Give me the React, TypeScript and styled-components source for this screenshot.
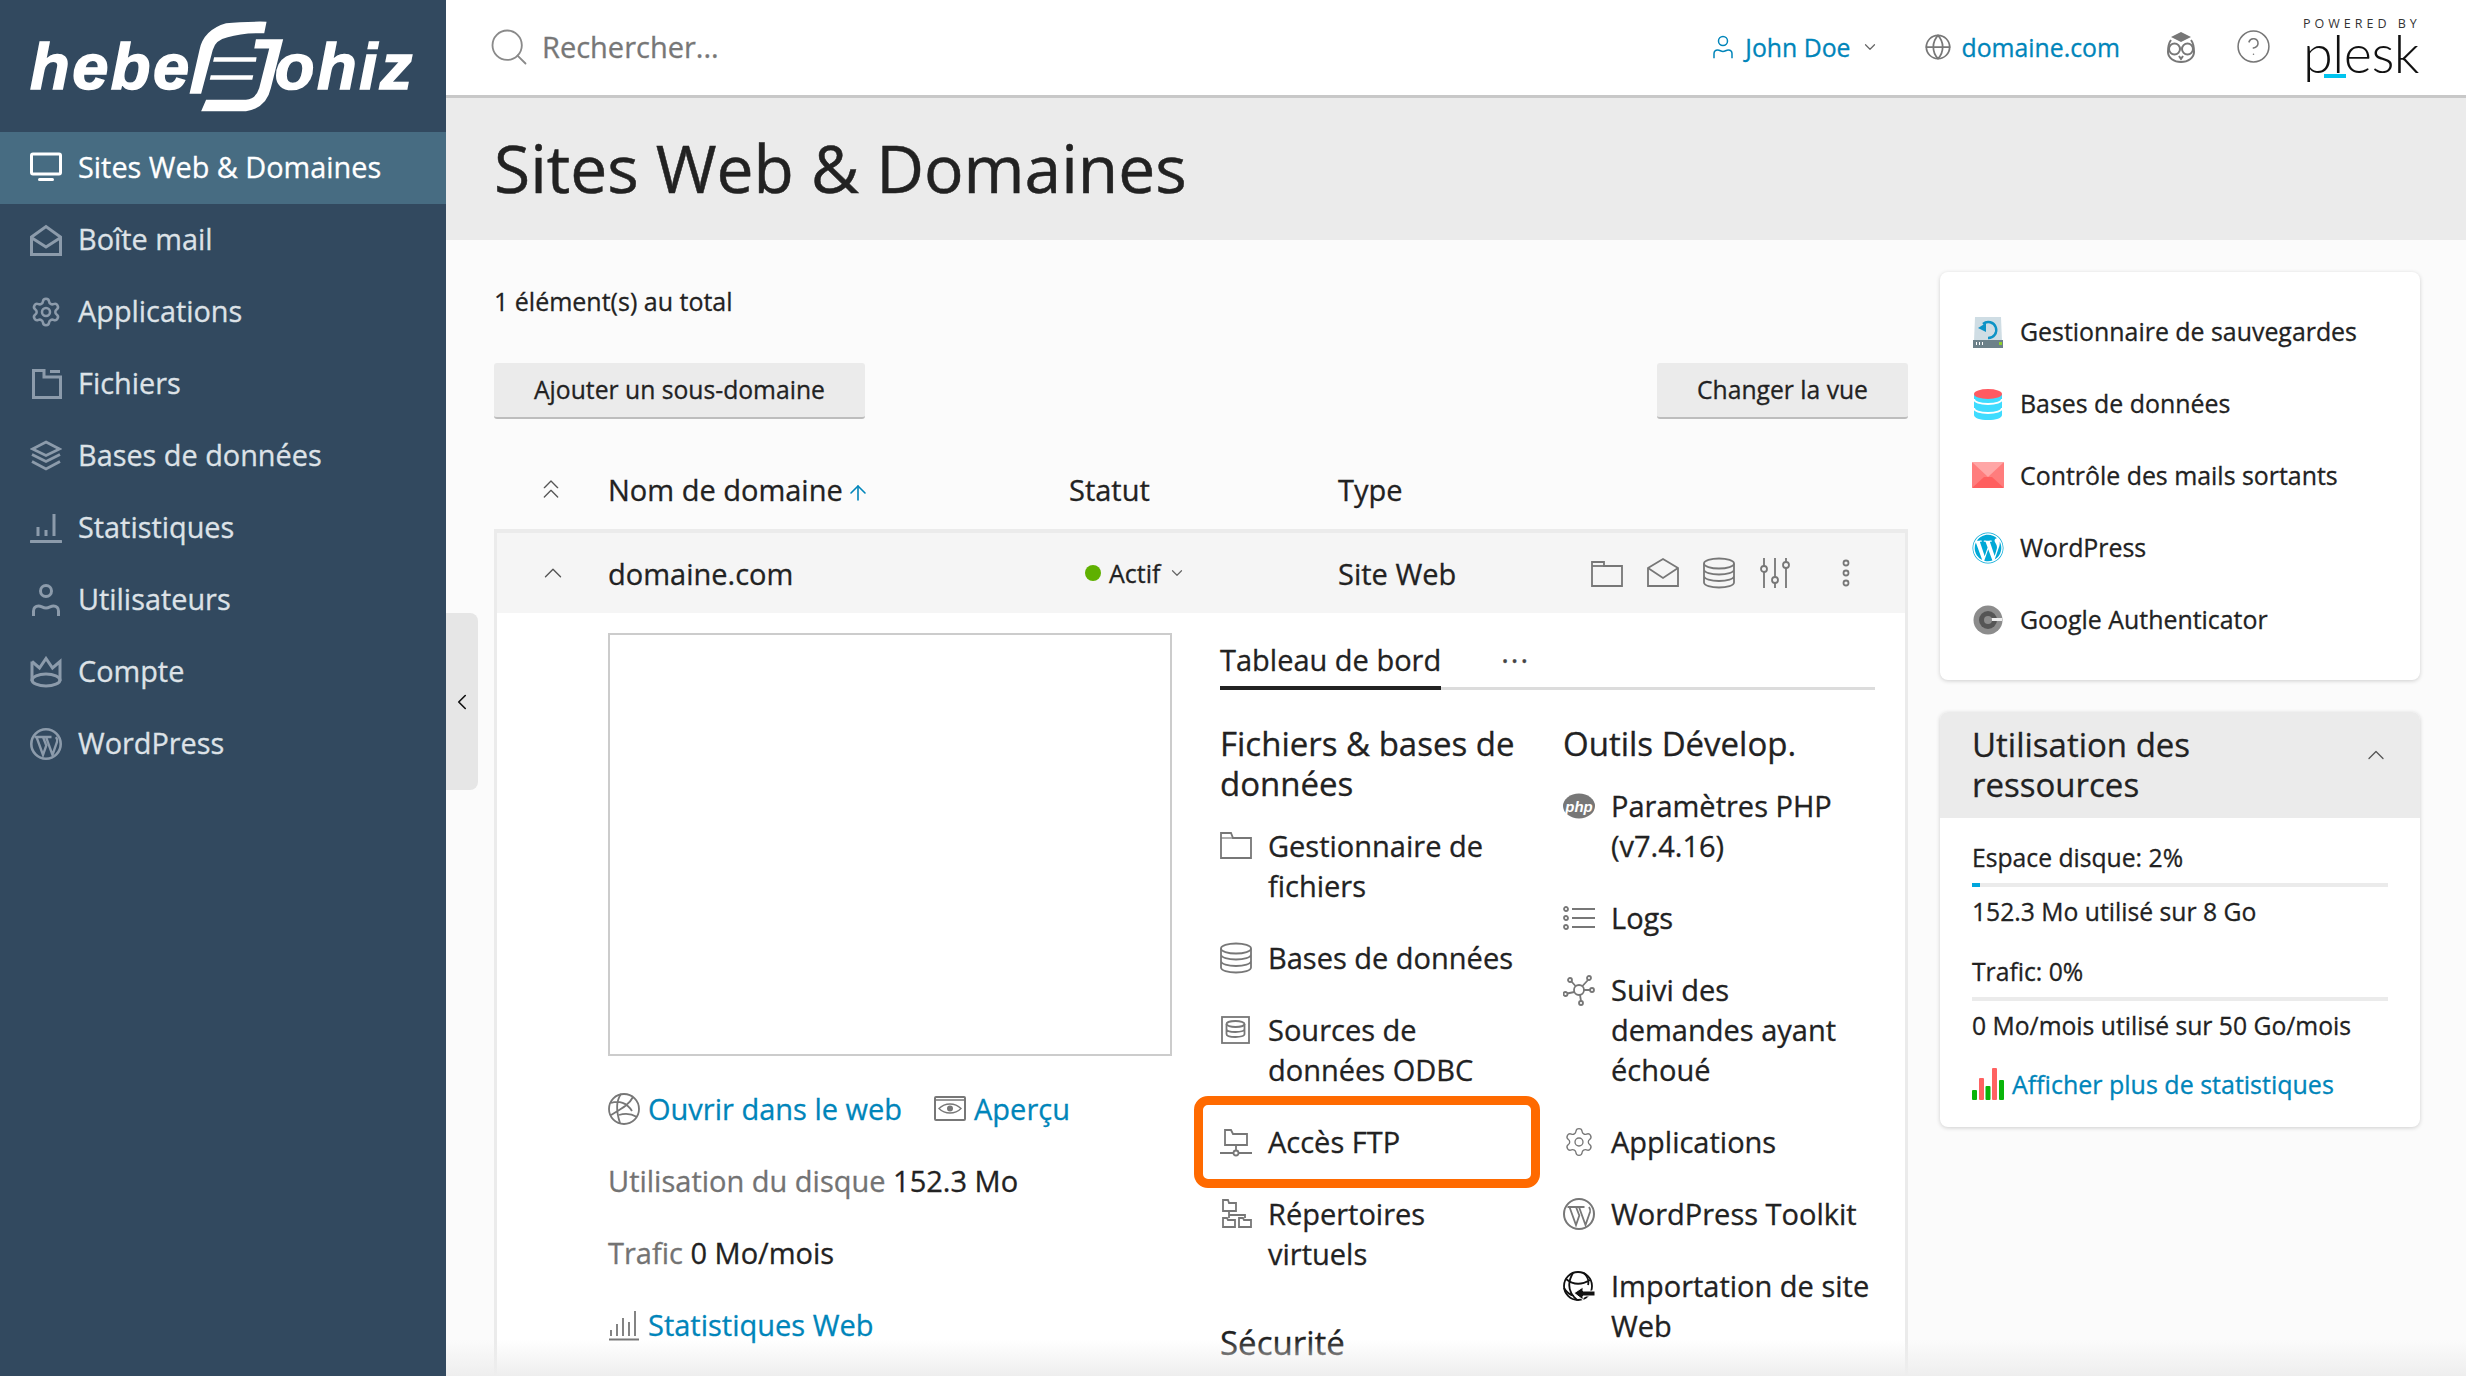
import * as React from 'react';
import styled, { createGlobalStyle } from 'styled-components';
import { Settings, Search, Globe, CircleHelp, ChevronDown, ChevronUp, ChevronsUp, ChevronLeft, ArrowUp } from 'lucide-react';
import { FaWordpress } from 'react-icons/fa';

const GlobalStyle = createGlobalStyle`
  html, body {
    margin: 0;
    padding: 0;
    background: #fbfbfb;
    color: #222;
    font-family: "Open Sans", "Liberation Sans", sans-serif;
    -webkit-text-stroke: 0.3px;
  }
  * { box-sizing: border-box; }
  a { text-decoration: none; color: inherit; }
`;

const LINK = '#0085ba';
const ICON_GREY = '#777';

const Icon = styled.svg.attrs({ viewBox: '0 0 32 32' })<{ $w?: number; $sw?: number }>`
  width: ${(p) => p.$w ?? 32}px;
  height: ${(p) => p.$w ?? 32}px;
  flex: none;
  fill: none;
  stroke: currentColor;
  stroke-width: ${(p) => p.$sw ?? 1.8};
`;

const WpRing = ({ sw = 2 }: { sw?: number }) => (
  <Icon $sw={sw}>
    <circle cx="16" cy="16" r={15 - sw / 2 + 1} />
    <path d="M6.500 9 13 27l3.300-9.500L13 9M4.500 9h11M16 9l6.500 18 4.500-13c.6-2 .4-3-1-5M14.500 9h7" strokeWidth={sw * 0.9} />
  </Icon>
);

// sidebar icons
const NavMonitor = () => (
  <Icon $sw={3}>
    <rect x="1.500" y="2" width="29" height="20" rx="1.500" />
    <rect x="8" y="26" width="16" height="3" rx="1.500" fill="currentColor" stroke="none" />
  </Icon>
);
const NavMail = () => (
  <Icon $sw={3}>
    <path d="M1.500 13 16 2.500 30.500 13v17.500h-29z" />
    <path d="M2 14l14 9 14-9" />
  </Icon>
);
const NavFolder = () => (
  <Icon $sw={3}>
    <path d="M3.500 2.500v27h27V9H14V2.500z" />
    <path d="M20 3.500h10" />
  </Icon>
);
const NavLayers = () => (
  <Icon $sw={2.8}>
    <path d="M16 2 29.500 9 16 15.500 2.500 9z" />
    <path d="M2 14.500 16 21.500 30 14.500" />
    <path d="M2 21.500 16 29 30 21.500" />
  </Icon>
);
const NavStats = () => (
  <Icon $sw={3}>
    <path d="M1 29.500h30" strokeLinecap="round" />
    <path d="M8 15v9M16 18v6M24 2v22" />
  </Icon>
);
const NavUser = () => (
  <Icon $sw={3}>
    <circle cx="16" cy="7" r="5.500" />
    <path d="M3.500 32v-5c0-3 2-5 5-5 3 0 4 2 7.500 2s4.500-2 7.500-2c3 0 5 2 5 5v5" />
  </Icon>
);
const NavCrown = () => (
  <Icon $sw={3}>
    <path d="M2 5.500 9.500 12 16 2.500 22.500 12 30 5.500V25" />
    <path d="M2 5.500V25" />
    <ellipse cx="16" cy="24" rx="14" ry="6" />
  </Icon>
);

// dashboard icons
const ItemFolder = () => (
  <Icon>
    <path d="M1 3v25h30V8H13l-2-5z" />
    <path d="M1 8h12" strokeWidth="1.200" />
  </Icon>
);
const ItemDb = () => (
  <Icon>
    <ellipse cx="16" cy="6.500" rx="15" ry="5" />
    <path d="M1 6.500v19c0 3 7 5 15 5s15-2 15-5v-19M1 12.500c0 3 7 5 15 5s15-2 15-5M1 19c0 3 7 5 15 5s15-2 15-5" />
  </Icon>
);
const ItemOdbc = () => (
  <Icon>
    <rect x="2" y="3" width="27" height="26" />
    <ellipse cx="15.500" cy="10" rx="9" ry="3" />
    <path d="M6.500 10v10c0 2 4 3 9 3s9-1 9-3V10M6.500 15c0 2 4 3 9 3s9-1 9-3" />
  </Icon>
);
const ItemFtp = () => (
  <Icon>
    <path d="M5 4v15h22V8H13l-2-4z" />
    <path d="M0 27h13M19 27h13M16 19v6" />
    <circle cx="16" cy="27" r="2.500" />
  </Icon>
);
const ItemVirtual = () => (
  <Icon>
    <path d="M3 2v11h13V5H9L8 2z" />
    <path d="M3 20v9h12v-7H8l-1-2zM19 20v9h12v-7H24l-1-2z" />
    <path d="M9 13v4h16v3M9 17v3" />
  </Icon>
);
const ItemPhp = () => (
  <Icon>
    <ellipse cx="16" cy="16" rx="16" ry="12.500" fill="currentColor" stroke="none" />
    <PhpText x="16" y="21.500" textAnchor="middle">php</PhpText>
  </Icon>
);
const ItemLogs = () => (
  <Icon>
    <circle cx="3" cy="7" r="2" />
    <circle cx="3" cy="16" r="2" />
    <circle cx="3" cy="25" r="2" />
    <path d="M9 7h23M9 16h23M9 25h23" />
  </Icon>
);
const ItemNetwork = () => (
  <Icon>
    <circle cx="16" cy="16" r="5" />
    <circle cx="7" cy="6" r="2" />
    <circle cx="26" cy="4" r="2" />
    <circle cx="2.500" cy="20" r="2" />
    <circle cx="29" cy="16" r="2" />
    <circle cx="18" cy="29" r="2" />
    <path d="M8.500 7.500 12.500 12M25 6l-6 6.500M4 19.500 11.500 18M21 16h6M17 21l1 6" />
  </Icon>
);
const ItemImport = () => (
  <Icon $sw={1.8} style={{ color: '#111' }}>
    <circle cx="15" cy="16" r="14" />
    <path d="M3 9c6 5 14 7 24 1M10 3C4 13 5 22 14 30M21 3c4 4 5 9 4 12M1 18c3 5 6 7 10 8" />
    <path d="M11 23l9-6v4h12v5H20v4z" fill="currentColor" stroke="#fff" strokeWidth="1" />
  </Icon>
);
const LinkGlobe = () => (
  <Icon>
    <circle cx="16" cy="16" r="15" />
    <path d="M3 10c8-3 16 0 21 8M13 1C8 8 8 18 12 30M25 4c-4 8-12 12-22 18M11 22c6-2 13-1 18 2" />
  </Icon>
);
const LinkPreview = () => (
  <Icon $sw={2}>
    <rect x="1" y="4" width="30" height="23" rx="1" />
    <path d="M5 15.500c6-6 16-6 22 0-6 6-16 6-22 0z" strokeWidth="1.400" />
    <circle cx="16" cy="15.500" r="3" fill="currentColor" stroke="none" />
    <path d="M1 7h30" strokeWidth="1.500" />
  </Icon>
);
const LinkStats = () => (
  <Icon>
    <path d="M1 30.500h30" strokeWidth="2" />
    <path d="M3 21v6M9 15v12M15 9v18M21 13v14M27 2v25" />
  </Icon>
);

// row actions
const RowFolder = () => (
  <Icon>
    <path d="M1 5v24h30V9H13V5z" />
    <path d="M1 9h12" />
  </Icon>
);
const RowMail = () => (
  <Icon>
    <path d="M1 11 16 2l15 9v18H1z" />
    <path d="M1 11l15 10 15-10" />
  </Icon>
);
const RowSliders = () => (
  <Icon>
    <path d="M5 1v8M5 15v16M16 1v19M16 26v5M27 1v4M27 11v20" />
    <circle cx="5" cy="12" r="3" />
    <circle cx="16" cy="23" r="3" />
    <circle cx="27" cy="8" r="3" />
  </Icon>
);
const RowKebab = () => (
  <Icon>
    <circle cx="16" cy="6" r="2.500" />
    <circle cx="16" cy="16" r="2.500" />
    <circle cx="16" cy="26" r="2.500" />
  </Icon>
);

// top bar
const TopUser = () => (
  <Icon $w={24} $sw={2}>
    <circle cx="16" cy="8" r="6" />
    <path d="M4 31v-6c0-3 2-5 5-5 3 0 4 2 7 2s4-2 7-2c3 0 5 2 5 5v6" />
  </Icon>
);
const TopOwl = () => (
  <Icon $sw={2}>
    <path d="M16 1 26 6 16 11 6 6z" fill="currentColor" stroke="none" />
    <path d="M6 9c-3 4-3 9-3 12 0 6 6 10 13 10s13-4 13-10c0-3 0-8-3-12" />
    <circle cx="9.500" cy="18" r="5.500" />
    <circle cx="22.500" cy="18" r="5.500" />
    <path d="M14 25l2 3 2-3" />
  </Icon>
);

// coloured shortcut icons
const ShotBackup = () => (
  <Icon>
    <path d="M3 1h26l1 24H2z" fill="#cfdde4" stroke="none" />
    <rect x="1" y="24" width="30" height="8" fill="#6d8189" stroke="none" />
    <rect x="27" y="26" width="3" height="3" fill="#8fd12b" stroke="none" />
    <path d="M4 26h1v3H4zM7 26h1v3H7zM10 26h1v3h-1z" fill="#fff" stroke="none" />
    <path d="M11 8a8 8 0 1 1 5 14" stroke="#0d93c6" strokeWidth="2.400" />
    <path d="M6 12l8-5v9z" fill="#0d93c6" stroke="none" />
  </Icon>
);
const ShotDb = () => (
  <Icon>
    <path d="M2 6h28v21c0 3-6 5-14 5S2 30 2 27z" fill="#3fdcff" stroke="none" />
    <ellipse cx="16" cy="6" rx="14" ry="5" fill="#ff5a61" stroke="none" />
    <path d="M2 11c0 3 6 5 14 5s14-2 14-5M2 20c0 3 6 5 14 5s14-2 14-5" stroke="#fff" />
  </Icon>
);
const ShotMail = () => (
  <Icon>
    <rect y="2" width="32" height="26" rx="1" fill="#ff7d7d" stroke="none" />
    <path d="M0 2h32L16 17z" fill="#ffa6a6" stroke="none" />
    <path d="M0 28l12-11h8l12 11z" fill="#ff5f5f" stroke="none" />
  </Icon>
);
const ShotGoogle = () => (
  <Icon>
    <circle cx="16" cy="16" r="14.500" fill="#8c8c8c" stroke="none" />
    <circle cx="16" cy="16" r="9" fill="#555" stroke="none" />
    <rect x="16" y="14" width="14" height="3" fill="#eee" stroke="none" />
    <circle cx="16" cy="16" r="4" fill="#8c8c8c" stroke="none" />
  </Icon>
);
const ShotStats = () => (
  <Icon>
    <rect x="0" y="22" width="5" height="10" rx="1" fill="#0ab40a" stroke="none" />
    <rect x="7" y="10" width="5" height="22" rx="1" fill="#ff6262" stroke="none" />
    <rect x="13.500" y="18" width="5" height="14" rx="1" fill="#0ab40a" stroke="none" />
    <rect x="20" y="0" width="5" height="32" rx="1" fill="#ff6262" stroke="none" />
    <rect x="27" y="12" width="5" height="20" rx="1" fill="#0ab40a" stroke="none" />
  </Icon>
);

const PhpText = styled.text`
  fill: #fff;
  stroke: none;
  font-family: "Liberation Sans", sans-serif;
  font-weight: 700;
  font-style: italic;
  font-size: 15px;
`;

const navItems = [
  { label: 'Sites Web & Domaines', icon: <NavMonitor />, active: true },
  { label: 'Boîte mail', icon: <NavMail /> },
  { label: 'Applications', icon: <Settings size={38} strokeWidth={1.9} /> },
  { label: 'Fichiers', icon: <NavFolder /> },
  { label: 'Bases de données', icon: <NavLayers /> },
  { label: 'Statistiques', icon: <NavStats /> },
  { label: 'Utilisateurs', icon: <NavUser /> },
  { label: 'Compte', icon: <NavCrown /> },
  { label: 'WordPress', icon: <WpRing sw={2.600} /> }
];

const shortcuts = [
  { label: 'Gestionnaire de sauvegardes', icon: <ShotBackup /> },
  { label: 'Bases de données', icon: <ShotDb /> },
  { label: 'Contrôle des mails sortants', icon: <ShotMail /> },
  { label: 'WordPress', icon: <FaWordpress size={32} color="#00a8d6" /> },
  { label: 'Google Authenticator', icon: <ShotGoogle /> }
];

const filesTools = [
  { label: 'Gestionnaire de fichiers', icon: <ItemFolder /> },
  { label: 'Bases de données', icon: <ItemDb /> },
  { label: 'Sources de données ODBC', icon: <ItemOdbc /> },
  { label: 'Accès FTP', icon: <ItemFtp />, marked: true },
  { label: 'Répertoires virtuels', icon: <ItemVirtual /> }
];

const devTools = [
  { label: 'Paramètres PHP (v7.4.16)', icon: <ItemPhp /> },
  { label: 'Logs', icon: <ItemLogs /> },
  { label: 'Suivi des demandes\u00a0ayant échoué', icon: <ItemNetwork /> },
  { label: 'Applications', icon: <Settings size={36} strokeWidth={1} /> },
  { label: 'WordPress Toolkit', icon: <WpRing sw={2} /> },
  { label: 'Importation de site Web', icon: <ItemImport /> }
];

export default function App() {
  return (
    <Page>
      <GlobalStyle />
      <Sidebar>
        <Logo>
          <LogoText>hebe</LogoText>
          <LogoMark viewBox="580 60 300 280">
            <path d="M590 282 620 150Q632 90 700 70Q750 64 822 65L815 100Q750 98 705 112Q668 120 660 150L625 282z" />
            <path d="M790 118H872L835 265Q822 325 760 335H625L640 300H760Q790 298 800 265L830 146H785z" />
            <path d="M664 172H792L790 186H661zM654 226H782L779 240H651z" />
          </LogoMark>
          <LogoText>ohiz</LogoText>
        </Logo>
        {navItems.map((item) => (
          <NavItem key={item.label} $active={item.active}>
            <NavIcon $active={item.active}>{item.icon}</NavIcon>
            <span>{item.label}</span>
          </NavItem>
        ))}
      </Sidebar>

      <Main>
        <TopBar>
          <SearchBox>
            <Search size={44} strokeWidth={1} color="#8a8a8a" />
            Rechercher...
          </SearchBox>
          <TopActions>
            <TopLink>
              <TopUser />
              John Doe
              <ChevronDown size={18} strokeWidth={1.6} color="#666" />
            </TopLink>
            <TopLink>
              <Globe size={28} strokeWidth={1.5} color="#777" />
              domaine.com
            </TopLink>
            <TopIcon><TopOwl /></TopIcon>
            <HelpIcon><CircleHelp size={37} strokeWidth={1} /></HelpIcon>
            <PleskLogo>
              <PoweredBy>POWERED BY</PoweredBy>
              <PleskWord>plesk<PleskDash /></PleskWord>
            </PleskLogo>
          </TopActions>
        </TopBar>

        <TitleBand>
          <Title>Sites Web &amp; Domaines</Title>
        </TitleBand>

        <Content>
          <ListColumn>
            <TotalLine>1 élément(s) au total</TotalLine>
            <Toolbar>
              <ToolButton>Ajouter un sous-domaine</ToolButton>
              <ToolButton>Changer la vue</ToolButton>
            </Toolbar>

            <HeaderRow>
              <ChevronCell><ChevronsUp size={32} strokeWidth={1} color="#555" /></ChevronCell>
              <div>
                Nom de domaine
                <SortArrow><ArrowUp size={24} strokeWidth={1.6} /></SortArrow>
              </div>
              <div>Statut</div>
              <div>Type</div>
            </HeaderRow>

            <DomainPanel>
              <DomainRow>
                <ChevronCell><ChevronUp size={30} strokeWidth={1.1} color="#555" /></ChevronCell>
                <div>domaine.com</div>
                <StatusCell>
                  <StatusDot />
                  Actif
                  <ChevronDown size={18} strokeWidth={1.6} color="#666" />
                </StatusCell>
                <div>Site Web</div>
                <RowActions>
                  <RowFolder />
                  <RowMail />
                  <ItemDb />
                  <RowSliders />
                  <KebabSlot><RowKebab /></KebabSlot>
                </RowActions>
              </DomainRow>

              <DomainBody>
                <InfoColumn>
                  <Preview />
                  <LinkRow>
                    <InfoLink><LinkGlobe />Ouvrir dans le web</InfoLink>
                    <InfoLink><LinkPreview />Aperçu</InfoLink>
                  </LinkRow>
                  <InfoLine><Muted>Utilisation du disque</Muted> 152.3 Mo</InfoLine>
                  <InfoLine><Muted>Trafic</Muted> 0 Mo/mois</InfoLine>
                  <InfoLink><LinkStats />Statistiques Web</InfoLink>
                </InfoColumn>

                <Dashboard>
                  <Tabs>
                    <Tab>Tableau de bord</Tab>
                    <TabMore>···</TabMore>
                  </Tabs>
                  <ToolGrid>
                    <div>
                      <ToolHeading>Fichiers &amp; bases de données</ToolHeading>
                      <ToolList>
                        {filesTools.map((tool) => (
                          <ToolItem key={tool.label} $marked={tool.marked}>
                            <ToolIcon>{tool.icon}</ToolIcon>
                            {tool.label}
                          </ToolItem>
                        ))}
                      </ToolList>
                      <SecondHeading>Sécurité</SecondHeading>
                    </div>
                    <div>
                      <ToolHeading>Outils Dévelop.</ToolHeading>
                      <ToolList>
                        {devTools.map((tool) => (
                          <ToolItem key={tool.label}>
                            <ToolIcon>{tool.icon}</ToolIcon>
                            {tool.label}
                          </ToolItem>
                        ))}
                      </ToolList>
                    </div>
                  </ToolGrid>
                </Dashboard>
              </DomainBody>
            </DomainPanel>
          </ListColumn>

          <SideColumn>
            <Card>
              <ShortcutList>
                {shortcuts.map((s) => (
                  <Shortcut key={s.label}>
                    {s.icon}
                    <span>{s.label}</span>
                  </Shortcut>
                ))}
              </ShortcutList>
            </Card>
            <Card>
              <CardHeader>
                <CardTitle>Utilisation des ressources</CardTitle>
                <ChevronUp size={28} strokeWidth={1.1} color="#555" />
              </CardHeader>
              <CardBody>
                <UsageLabel>Espace disque: 2%</UsageLabel>
                <UsageBar><UsageFill style={{ width: '2%' }} /></UsageBar>
                <UsageLabel>152.3 Mo utilisé sur 8 Go</UsageLabel>
                <UsageLabel $spaced>Trafic: 0%</UsageLabel>
                <UsageBar><UsageFill style={{ width: '0%' }} /></UsageBar>
                <UsageLabel>0 Mo/mois utilisé sur 50 Go/mois</UsageLabel>
                <StatsLink><ShotStats />Afficher plus de statistiques</StatsLink>
              </CardBody>
            </Card>
          </SideColumn>
        </Content>

        <CollapseHandle><ChevronLeft size={26} strokeWidth={1.5} color="#111" /></CollapseHandle>
        <BottomFade />
      </Main>
    </Page>
  );
}

const Page = styled.div`
  display: flex;
  width: 100%;
  height: 100vh;
  overflow: hidden;
`;

const Sidebar = styled.nav`
  flex: none;
  width: 446px;
  background: #32495f;
  color: #dde2e7;
  font-size: 28.850px;
`;

const Logo = styled.div`
  display: flex;
  align-items: flex-start;
  height: 132px;
  padding: 22px 0 0 30px;
  color: #fff;
`;

const LogoText = styled.span`
  margin-top: 12px;
  font-family: "Liberation Sans", sans-serif;
  font-weight: 700;
  font-style: italic;
  font-size: 65px;
  line-height: 66px;
  letter-spacing: 2.500px;
  -webkit-text-stroke: 1.500px #fff;
`;

const LogoMark = styled.svg`
  flex: none;
  width: 100px;
  height: 93px;
  margin: -2px -11px 0 -6px;
  fill: #fff;
`;

const NavItem = styled.a<{ $active?: boolean }>`
  display: flex;
  align-items: center;
  gap: 16px;
  height: 72px;
  padding-left: 30px;
  background: ${(p) => (p.$active ? '#476c82' : 'transparent')};
  color: ${(p) => (p.$active ? '#fff' : '#dde2e7')};
  span:last-child { margin-bottom: 3px; }
`;

const NavIcon = styled.span<{ $active?: boolean }>`
  display: flex;
  align-items: center;
  justify-content: center;
  width: 32px;
  height: 32px;
  color: ${(p) => (p.$active ? '#fff' : '#8c9bab')};
`;

const Main = styled.main`
  position: relative;
  flex: 1;
  min-width: 0;
  display: flex;
  flex-direction: column;
`;

const TopBar = styled.header`
  flex: none;
  display: flex;
  align-items: center;
  justify-content: space-between;
  height: 98px;
  padding: 0 48px 2px 41px;
  background: #fff;
  border-bottom: 3px solid #c8c8c8;
`;

const SearchBox = styled.div`
  display: flex;
  align-items: center;
  gap: 11px;
  font-size: 29px;
  color: #777;
`;

const TopActions = styled.div`
  display: flex;
  align-items: center;
  gap: 45px;
`;

const TopLink = styled.a`
  display: flex;
  align-items: center;
  gap: 10px;
  font-size: 24.800px;
  color: ${LINK};
`;

const TopIcon = styled.span`
  display: flex;
  color: ${ICON_GREY};
`;

const HelpIcon = styled(TopIcon)`
  margin-left: -7px;
`;

const PleskLogo = styled.div`
  display: flex;
  flex-direction: column;
  width: 115px;
  margin-left: -14px;
`;

const PoweredBy = styled.div`
  font-size: 12.500px;
  font-weight: 400;
  line-height: 14px;
  letter-spacing: 4px;
  white-space: nowrap;
  color: #333;
  -webkit-text-stroke: 0;
`;

const PleskWord = styled.div`
  position: relative;
  margin-top: -2px;
  font-family: "Lato", sans-serif;
  font-weight: 300;
  font-size: 54px;
  line-height: 48px;
  letter-spacing: -0.500px;
  color: #111;
  -webkit-text-stroke: 0;
`;

const PleskDash = styled.span`
  position: absolute;
  left: 21px;
  bottom: -1px;
  width: 22px;
  height: 4px;
  background: #00c4ef;
`;

const TitleBand = styled.div`
  flex: none;
  display: flex;
  align-items: center;
  height: 142px;
  padding: 0 0 3px 48px;
  background: #ebebeb;
`;

const Title = styled.h1`
  margin: 0;
  font-weight: 400;
  font-size: 65.900px;
  line-height: 80px;
  color: #222;
  -webkit-text-stroke: 0.500px;
`;

const Content = styled.div`
  flex: 1;
  min-height: 0;
  display: flex;
  gap: 32px;
  padding: 32px 46px 0 48px;
  background: #fbfbfb;
`;

const ListColumn = styled.div`
  width: 1414px;
  flex: none;
`;

const TotalLine = styled.div`
  margin-top: 11px;
  font-size: 25px;
  line-height: 36px;
`;

const Toolbar = styled.div`
  display: flex;
  justify-content: space-between;
  margin-top: 44px;
`;

const ToolButton = styled.button`
  height: 56px;
  padding: 0 40px 2px;
  border: 0;
  border-bottom: 2px solid #bdbdbd;
  border-radius: 3px;
  background: #ebebeb;
  color: #222;
  font-family: inherit;
  font-weight: 400;
  font-size: 24.700px;
`;

const HeaderRow = styled.div`
  display: grid;
  grid-template-columns: 114px 461px 269px 1fr;
  align-items: center;
  height: 74px;
  padding-bottom: 6px;
  margin-top: 36px;
  font-size: 29px;
`;

const ChevronCell = styled.div`
  display: flex;
  justify-content: center;
`;

const SortArrow = styled.span`
  display: inline-flex;
  margin-left: 3px;
  vertical-align: -4px;
  color: ${LINK};
`;

const DomainPanel = styled.section`
  border: solid #ebebeb;
  border-width: 4px 3px 0;
  background: #fff;
`;

const DomainRow = styled.div`
  display: grid;
  grid-template-columns: 111px 461px 269px 1fr auto;
  align-items: center;
  height: 80px;
  background: #f5f5f5;
  font-size: 29px;
`;

const StatusCell = styled.div`
  display: flex;
  align-items: center;
  gap: 8px;
  padding-left: 16px;
  font-size: 25px;
`;

const StatusDot = styled.span`
  width: 16px;
  height: 16px;
  border-radius: 50%;
  background: #5fb000;
`;

const RowActions = styled.div`
  display: flex;
  align-items: center;
  gap: 24px;
  padding-right: 43px;
  color: ${ICON_GREY};
`;

const KebabSlot = styled.span`
  display: flex;
  margin-left: 15px;
`;

const DomainBody = styled.div`
  display: flex;
  gap: 48px;
  padding: 20px 30px 0 111px;
  font-size: 29px;
  line-height: 40px;
`;

const InfoColumn = styled.div`
  flex: none;
  width: 564px;
`;

const Preview = styled.div`
  height: 423px;
  margin-bottom: 33px;
  border: 2px solid #ccc;
  background: #fff;
`;

const LinkRow = styled.div`
  display: flex;
  gap: 32px;
  margin-bottom: 32px;
`;

const InfoLink = styled.a`
  display: flex;
  align-items: center;
  gap: 8px;
  color: ${LINK};
  svg { color: ${ICON_GREY}; }
`;

const InfoLine = styled.div`
  margin-bottom: 32px;
`;

const Muted = styled.span`
  color: #737373;
`;

const Dashboard = styled.div`
  flex: 1;
  min-width: 0;
`;

const Tabs = styled.div`
  display: flex;
  align-items: flex-start;
  padding-top: 7px;
  border-bottom: 3px solid #dcdcdc;
`;

const Tab = styled.div`
  padding-bottom: 6px;
  margin-bottom: -3px;
  border-bottom: 4px solid #222;
`;

const TabMore = styled.div`
  margin-left: 60px;
  letter-spacing: 2px;
  color: #444;
`;

const ToolGrid = styled.div`
  display: grid;
  grid-template-columns: 303px 1fr;
  column-gap: 40px;
  margin-top: 34px;
`;

const ToolHeading = styled.h3`
  margin: 0 0 22px;
  font-weight: 400;
  font-size: 33px;
  line-height: 40px;
`;

const SecondHeading = styled(ToolHeading)`
  margin-top: 49px;
`;

const ToolList = styled.ul`
  display: flex;
  flex-direction: column;
  gap: 32px;
  margin: 0;
  padding: 0;
  list-style: none;
`;

const ToolItem = styled.li<{ $marked?: boolean }>`
  position: relative;
  display: flex;
  gap: 16px;
  ${(p) =>
    p.$marked &&
    `
    &::after {
      content: '';
      position: absolute;
      inset: -26px -17px -26px -26px;
      border: 9px solid #ff6a00;
      border-radius: 14px;
    }
  `}
`;

const ToolIcon = styled.span`
  flex: none;
  display: flex;
  align-items: center;
  justify-content: center;
  width: 32px;
  height: 40px;
  color: ${ICON_GREY};
`;

const SideColumn = styled.aside`
  flex: none;
  width: 480px;
  display: flex;
  flex-direction: column;
  align-items: stretch;
  gap: 32px;
`;

const Card = styled.div`
  border-radius: 8px;
  background: #fff;
  box-shadow: 0 1px 4px rgba(0, 0, 0, 0.18);
  overflow: hidden;
`;

const ShortcutList = styled.div`
  display: flex;
  flex-direction: column;
  gap: 32px;
  padding: 40px 32px;
`;

const Shortcut = styled.a`
  display: flex;
  align-items: center;
  gap: 16px;
  height: 40px;
  font-size: 24.900px;
  span {
    line-height: 38px;
    padding-bottom: 2px;
  }
`;

const CardHeader = styled.div`
  display: flex;
  align-items: flex-start;
  justify-content: space-between;
  height: 106px;
  padding: 13px 30px 0 32px;
  background: #ebebeb;
  svg { margin-top: 16px; }
`;

const CardTitle = styled.h3`
  width: 280px;
  margin: 0;
  font-weight: 400;
  font-size: 33px;
  line-height: 40px;
`;

const CardBody = styled.div`
  padding: 22px 32px 25px;
  font-size: 25px;
`;

const UsageLabel = styled.div<{ $spaced?: boolean }>`
  margin-top: ${(p) => (p.$spaced ? '24px' : '0')};
  font-size: 24.700px;
  line-height: 36px;
`;

const UsageBar = styled.div`
  height: 4px;
  margin: 7px 0 7px;
  background: #ebebeb;
`;

const UsageFill = styled.div`
  height: 100%;
  background: #00a6dc;
`;

const StatsLink = styled.a`
  display: flex;
  align-items: center;
  gap: 8px;
  margin-top: 22px;
  line-height: 36px;
  color: ${LINK};
`;

const CollapseHandle = styled.div`
  position: absolute;
  left: 0;
  top: 613px;
  display: flex;
  align-items: center;
  justify-content: center;
  width: 32px;
  height: 177px;
  border-radius: 0 8px 8px 0;
  background: #e6e6e6;
`;

const BottomFade = styled.div`
  position: absolute;
  left: 0;
  right: 0;
  bottom: 0;
  height: 36px;
  background: linear-gradient(rgba(238, 238, 238, 0), #eeeeee);
  pointer-events: none;
`;
